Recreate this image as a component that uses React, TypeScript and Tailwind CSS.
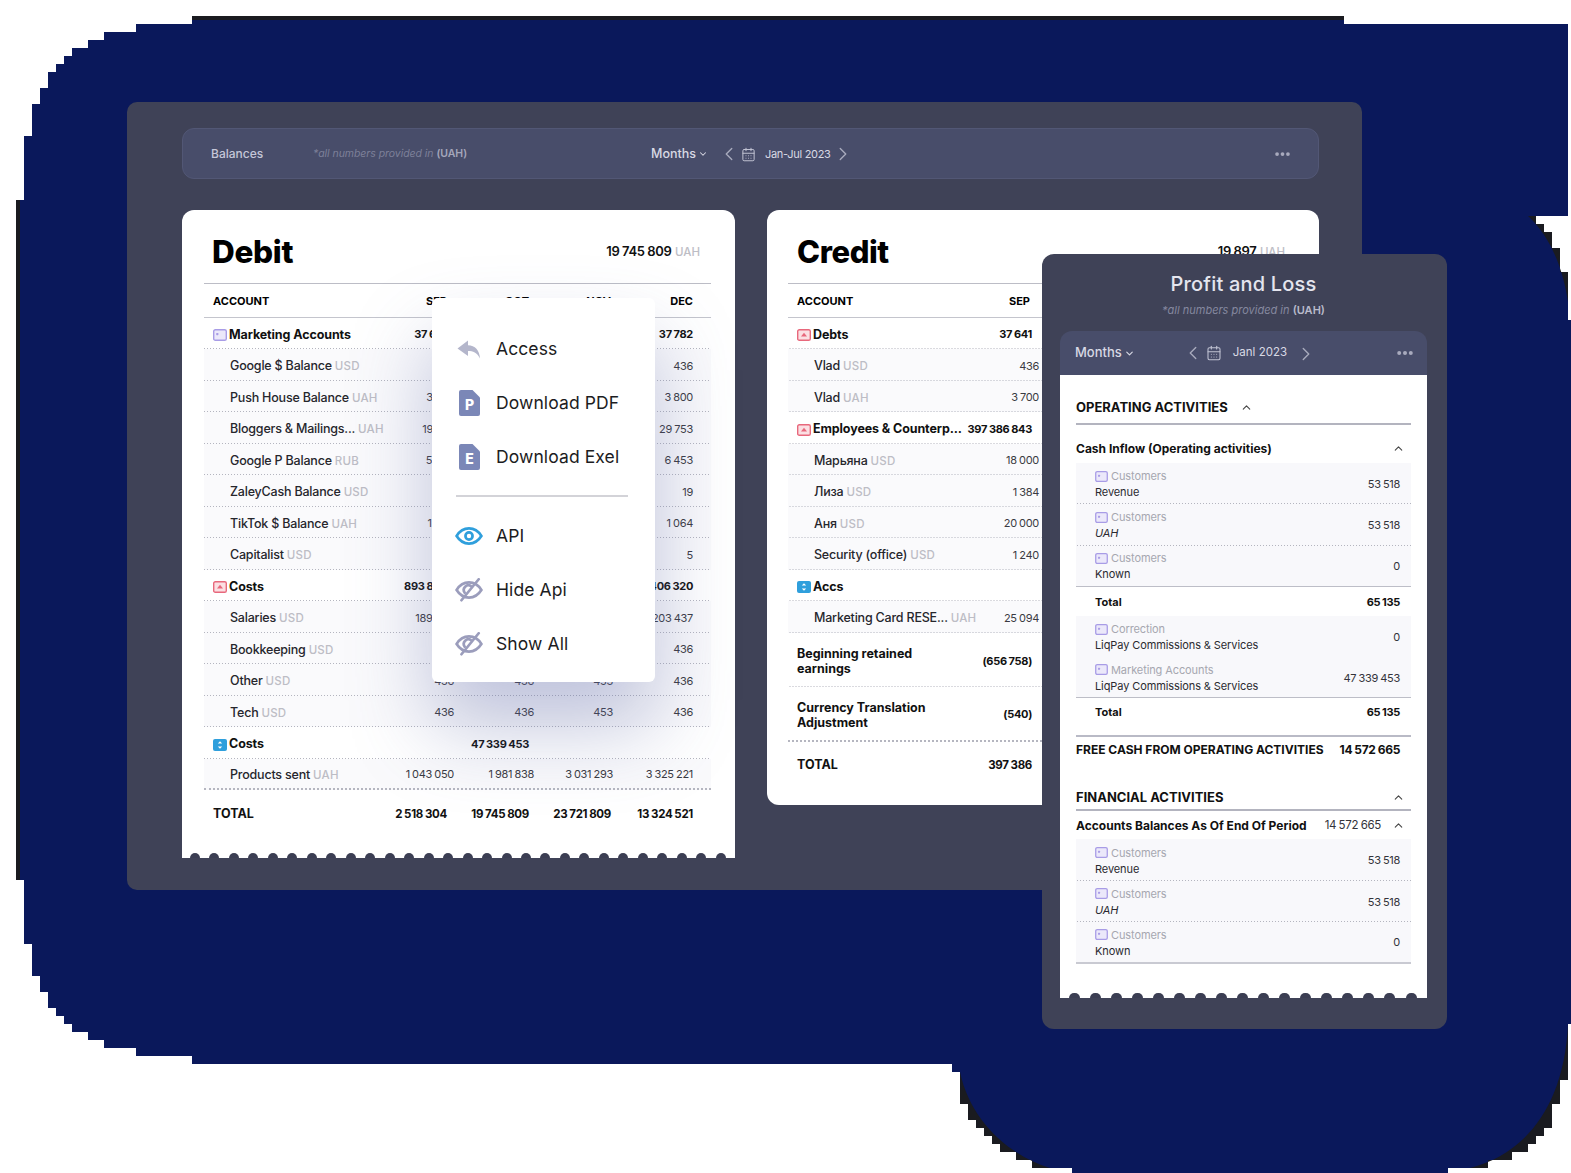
import { ReactNode } from "react";
import { CalendarDays, ChevronDown, ChevronLeft, ChevronRight, ChevronUp } from "lucide-react";

type Kind = "purple" | "red" | "blue";

const debitRows = [
  { icon: "purple", name: "Marketing Accounts", vals: ["37 641", "", "", "37 782"] },
  { name: "Google $ Balance", unit: "USD", vals: ["", "", "", "436"] },
  { name: "Push House Balance", unit: "UAH", vals: ["3 700", "", "", "3 800"] },
  { name: "Bloggers & Mailings...", unit: "UAH", vals: ["19 753", "", "", "29 753"] },
  { name: "Google P Balance", unit: "RUB", vals: ["5 453", "", "", "6 453"] },
  { name: "ZaleyCash Balance", unit: "USD", vals: ["", "", "", "19"] },
  { name: "TikTok $ Balance", unit: "UAH", vals: ["1 064", "", "", "1 064"] },
  { name: "Capitalist", unit: "USD", vals: ["", "", "", "5"] },
  { icon: "red", name: "Costs", vals: ["893 820", "", "", "406 320"] },
  { name: "Salaries", unit: "USD", vals: ["189 437", "", "", "203 437"] },
  { name: "Bookkeeping", unit: "USD", vals: ["", "", "", "436"] },
  { name: "Other", unit: "USD", vals: ["436", "436", "453", "436"] },
  { name: "Tech", unit: "USD", vals: ["436", "436", "453", "436"] },
  { icon: "blue", name: "Costs", vals: ["", "47 339 453", "", ""] },
  { name: "Products sent", unit: "UAH", vals: ["1 043 050", "1 981 838", "3 031 293", "3 325 221"], last: true },
];

const creditRows = [
  { icon: "red", name: "Debts", val: "37 641" },
  { name: "Vlad", unit: "USD", val: "436" },
  { name: "Vlad", unit: "UAH", val: "3 700" },
  { icon: "red", name: "Employees & Counterp...", val: "397 386 843" },
  { name: "Марьяна", unit: "USD", val: "18 000" },
  { name: "Лиза", unit: "USD", val: "1 384" },
  { name: "Аня", unit: "USD", val: "20 000" },
  { name: "Security (office)", unit: "USD", val: "1 240" },
  { icon: "blue", name: "Accs", val: "" },
  { name: "Marketing Card RESE...", unit: "UAH", val: "25 094" },
];

// repeating dots at the foot of a row, wider apart than a dotted border
const dots = "bg-[linear-gradient(to_right,#b4b5bf_1.5px,transparent_1.5px)] bg-[length:3px_1px] bg-bottom bg-repeat-x";
const num = "whitespace-nowrap tracking-[-0.3px] [word-spacing:-0.5px]";

function AccountIcon({ kind, small }: { kind: Kind; small?: boolean }) {
  const size = small ? "w-[13px] h-[11px]" : "w-[14px] h-[12px]";
  if (kind === "blue") {
    return (
      <svg viewBox="0 0 14 12" className={`${size} shrink-0`}>
        <rect width="14" height="12" rx="2" fill="#2f9fdc" />
        <path d="M7 2.200 9.200 4.600H4.800ZM7 9.800 4.800 7.400H9.200Z" fill="#fff" />
      </svg>
    );
  }
  const color = kind === "red" ? "#e8687c" : "#a89ce6";
  const fill = kind === "red" ? "#fbdfe3" : "#ebe8fa";
  return (
    <svg viewBox="0 0 14 12" className={`${size} shrink-0`}>
      <rect x="0.7" y="0.7" width="12.6" height="10.6" rx="1.6" fill={fill} stroke={color} strokeWidth="1.4" />
      {kind === "red" ? (
        <path d="M7 3.800 10 7.400H4Z" fill={color} />
      ) : (
        <rect x="3.200" y="4" width="2.200" height="2.200" rx="0.6" fill={color} />
      )}
    </svg>
  );
}

function Dots({ className }: { className: string }) {
  return (
    <svg viewBox="0 0 16 4" className={className}>
      <circle cx="2.200" cy="2" r="2" fill="currentColor" />
      <circle cx="8" cy="2" r="2" fill="currentColor" />
      <circle cx="13.800" cy="2" r="2" fill="currentColor" />
    </svg>
  );
}

function Scallops({ count, className, bump }: { count: number; className: string; bump: string }) {
  return (
    <div className={`absolute bottom-0 flex justify-between ${className}`}>
      {Array.from({ length: count }).map((_, i) => (
        <div key={i} className={`rounded-t-full bg-[#3b3e53] ${bump}`} />
      ))}
    </div>
  );
}

function Unit({ children }: { children: ReactNode }) {
  return <span className="ml-[3px] text-[11.5px] font-medium tracking-[0.2px] text-[#bdbdc5]">{children}</span>;
}

function DebitCard() {
  return (
    <div className="relative h-[648px] w-[553px] shrink-0 rounded-t-[12px] bg-white pl-[22px] pr-[24px]">
      <div className="flex h-[74px] items-center justify-between border-b-[1.5px] border-[#bcbdc6] pl-[8px] pr-[11px] pt-[11px]">
        <span className="text-[31.5px] font-extrabold tracking-[-0.3px] text-black">Debit</span>
        <span className={`text-[13px] font-semibold text-[#111] ${num}`}>
          19 745 809 <span className="ml-[1px] text-[11.5px] font-medium tracking-normal text-[#bdbdc5]">UAH</span>
        </span>
      </div>
      <div className="grid h-[33.5px] grid-cols-[minmax(0,1fr)_82px_82px_82px_82px] items-center border-b-[1.5px] border-[#c4c5cd] pl-[9px] pr-[18px] pt-[1px] text-[11px] font-bold text-black">
        <span>ACCOUNT</span>
        <span className="text-right">SEP</span>
        <span className="text-right">OCT</span>
        <span className="text-right">NOV</span>
        <span className="text-right">DEC</span>
      </div>
      {debitRows.map((row, i) =>
        row.icon ? (
          <div
            key={i}
            className={`grid h-[31.5px] grid-cols-[minmax(0,1fr)_82px_82px_82px_82px] items-center pl-[9px] pr-[18px] pt-[2px] text-[11px] font-bold text-[#111] ${dots}`}
          >
            <span className="mt-[2px] flex items-center gap-[2px] text-[12.5px] font-bold tracking-[-0.1px]">
              <AccountIcon kind={row.icon as Kind} />
              {row.name}
            </span>
            {row.vals.map((v, j) => (
              <span key={j} className={`text-right ${num}`}>
                {v}
              </span>
            ))}
          </div>
        ) : (
          <div
            key={i}
            className={`grid h-[31.5px] grid-cols-[minmax(0,1fr)_82px_80px_79px_80px] items-center bg-[#fafafc] pl-[26px] pr-[18px] pt-[2px] text-[11px] text-[#3a3a42] ${
              row.last ? "border-b-2 border-dotted border-[#b5b6c0]" : dots
            }`}
          >
            <span className="mt-[2px] whitespace-nowrap text-[12.5px] font-medium tracking-[-0.2px] text-[#26262c]">
              {row.name}
              <Unit>{row.unit}</Unit>
            </span>
            {row.vals.map((v, j) => (
              <span key={j} className={`text-right ${num}`}>
                {v}
              </span>
            ))}
          </div>
        )
      )}
      <div className="grid h-[45px] grid-cols-[minmax(0,1fr)_82px_82px_82px_82px] items-center pl-[9px] pr-[18px] pt-[4px] text-[11.5px] font-bold text-[#111]">
        <span className="text-[12.5px]">TOTAL</span>
        <span className={`text-right ${num}`}>2 518 304</span>
        <span className={`text-right ${num}`}>19 745 809</span>
        <span className={`text-right ${num}`}>23 721 809</span>
        <span className={`text-right ${num}`}>13 324 521</span>
      </div>
      <Scallops count={28} className="left-[8px] right-[9px]" bump="h-[5px] w-[10px]" />
    </div>
  );
}

function CreditCard() {
  return (
    <div className="h-[595px] w-[552px] shrink-0 rounded-[12px] bg-white pl-[21px] pr-[21px]">
      <div className="flex h-[74px] items-center justify-between border-b-[1.5px] border-[#bcbdc6] pl-[9px] pr-[13px] pt-[11px]">
        <span className="text-[31px] font-extrabold tracking-[-0.4px] text-black">Credit</span>
        <span className={`text-[13px] font-semibold text-[#111] ${num}`}>
          19 897 <span className="ml-[1px] text-[11.5px] font-medium tracking-normal text-[#bdbdc5]">UAH</span>
        </span>
      </div>
      <div className="h-[33.5px] border-b-[1.5px] border-[#c4c5cd]">
        <div className="flex h-full w-[242px] items-center justify-between pl-[9px] pt-[1px] text-[11px] font-bold text-black">
          <span>ACCOUNT</span>
          <span>SEP</span>
        </div>
      </div>
      {creditRows.map((row, i) =>
        row.icon ? (
          <div key={i} className={`h-[31.5px] ${dots}`}>
            <div className="flex h-full w-[244px] items-center justify-between pl-[9px] pt-[2px] text-[11px] font-bold text-[#111]">
              <span className="mt-[2px] flex items-center gap-[2px] whitespace-nowrap text-[12.5px] tracking-[-0.1px]">
                <AccountIcon kind={row.icon as Kind} />
                {row.name}
              </span>
              <span className={num}>{row.val}</span>
            </div>
          </div>
        ) : (
          <div key={i} className={`h-[31.5px] bg-[#fafafc] ${dots}`}>
            <div className="flex h-full w-[251px] items-center justify-between pl-[26px] pt-[2px] text-[11px] text-[#3a3a42]">
              <span className="mt-[2px] whitespace-nowrap text-[12.5px] font-medium tracking-[-0.2px] text-[#26262c]">
                {row.name}
                <Unit>{row.unit}</Unit>
              </span>
              <span className={num}>{row.val}</span>
            </div>
          </div>
        )
      )}
      <div className={`h-[54px] ${dots}`}>
        <div className="flex h-full w-[244px] items-center justify-between pl-[9px] pt-[3px] text-[12.5px] font-bold leading-[15px] text-[#111]">
          <span>
            Beginning retained
            <br />
            earnings
          </span>
          <span className={`text-[11px] ${num}`}>(656 758)</span>
        </div>
      </div>
      <div className="h-[55px] border-b-2 border-dotted border-[#b5b6c0]">
        <div className="flex h-full w-[244px] items-center justify-between pl-[9px] pt-[3px] text-[12.5px] font-bold leading-[15px] text-[#111]">
          <span>
            Currency Translation
            <br />
            Adjustment
          </span>
          <span className={`text-[11px] ${num}`}>(540)</span>
        </div>
      </div>
      <div className="flex h-[44px] w-[244px] items-center justify-between pl-[9px] pt-[4px] text-[11.5px] font-bold text-[#111]">
        <span className="text-[12.5px]">TOTAL</span>
        <span className={num}>397 386</span>
      </div>
    </div>
  );
}

function ReplyIcon() {
  return (
    <svg viewBox="0 0 24 19" className="h-[19px] w-[24px]">
      <path d="M11 .5 .5 8.400 11 16V11c5 0 9 1.500 12 7.500C22.600 10 18 5.300 11 5.200Z" fill="#b4b6cb" />
    </svg>
  );
}

function FileIcon({ letter }: { letter: string }) {
  return (
    <svg viewBox="0 0 21 26" className="h-[26px] w-[21px]">
      <path d="M2 0H13.500L21 7.500V24a2 2 0 0 1-2 2H2a2 2 0 0 1-2-2V2A2 2 0 0 1 2 0Z" fill="#7b87b7" />
      <text x="10.500" y="19.500" textAnchor="middle" fontSize="14" fontWeight="800" fill="#fff" fontFamily="Inter, sans-serif">
        {letter}
      </text>
    </svg>
  );
}

function EyeIcon({ slashed }: { slashed?: boolean }) {
  const color = slashed ? "#9b9dbc" : "#2f9fdc";
  return (
    <svg viewBox="0 0 26 22" className="h-[24px] w-[28px]" fill="none" stroke={color} strokeWidth="2.500" strokeLinecap="round">
      <path d="M1.500 11C4.500 6.200 8.500 4 13 4s8.500 2.200 11.500 7C21.500 15.800 17.500 18 13 18S4.500 15.800 1.500 11Z" />
      {slashed ? (
        <>
          <path d="M9 13.500a4.300 4.300 0 0 1 6-6" />
          <path d="M6 20.500 22 1" />
        </>
      ) : (
        <circle cx="13" cy="11" r="3.300" />
      )}
    </svg>
  );
}

function MenuItem({ icon, label }: { icon: ReactNode; label: string }) {
  return (
    <div className="flex h-[54.2px] items-center">
      <div className="flex w-[64px] justify-center pl-[10px]">{icon}</div>
      <span className="text-[17.5px] font-normal tracking-[0.1px] text-[#1c1c22]">{label}</span>
    </div>
  );
}

function Menu() {
  return (
    <div className="absolute left-[432px] top-[298px] h-[384px] w-[223px] rounded-[6px] bg-white pt-[24px] shadow-[0_45px_80px_0_rgba(95,105,165,0.38)]">
      <MenuItem icon={<ReplyIcon />} label="Access" />
      <MenuItem icon={<FileIcon letter="P" />} label="Download PDF" />
      <MenuItem icon={<FileIcon letter="E" />} label="Download Exel" />
      <div className="mb-[12px] ml-[24px] mt-[10px] h-[2px] w-[172px] bg-[#d3d3d8]" />
      <MenuItem icon={<EyeIcon />} label="API" />
      <MenuItem icon={<EyeIcon slashed />} label="Hide Api" />
      <MenuItem icon={<EyeIcon slashed />} label="Show All" />
    </div>
  );
}

function PnlRow({ label, sub, value, italic, border, tall }: { label: string; sub: string; value: string; italic?: boolean; border?: string; tall?: boolean }) {
  return (
    <div className={`flex items-center justify-between bg-[#f8f8fb] pl-[19px] pr-[11px] pt-[1px] text-[11px] ${tall ? "h-[42.3px]" : "h-[41.3px]"} ${border ?? ""}`}>
      <div className="leading-[16px] tracking-[-0.1px]">
        <div className="flex items-center gap-[3px] text-[#a6a7b0]">
          <AccountIcon kind="purple" small />
          {label}
        </div>
        <div className={`text-[#2a2a30] ${italic ? "italic" : ""}`}>{sub}</div>
      </div>
      <span className={`text-[#33333a] ${num}`}>{value}</span>
    </div>
  );
}

const solid = "border-b-[1.5px] border-[#bdbec7]";

function ProfitLoss() {
  return (
    <div className="absolute left-[1042px] top-[254px] h-[775px] w-[405px] rounded-[12px] bg-[#3f4257] pl-[18px] pr-[20px]">
      <div className="pt-[16px] text-center text-[20px] font-medium leading-[28px] tracking-[0.2px] text-[#e4e5ee]">Profit and Loss</div>
      <div className="mt-[4px] text-center text-[11px] italic leading-[16px] text-[#85889f]">
        *all numbers provided in <span className="font-semibold not-italic text-[#b9bbcb]">(UAH)</span>
      </div>
      <div className="mt-[13px] flex h-[44px] items-center rounded-t-[12px] bg-[#484d6a] pl-[15px] pr-[14px] text-[#d8d9e4]">
        <span className="text-[13px] font-medium">Months</span>
        <ChevronDown size={11} strokeWidth={2.5} className="ml-[2px]" />
        <ChevronLeft size={22} strokeWidth={1.5} className="ml-[47px] text-[#a8aabd]" />
        <CalendarDays size={16} strokeWidth={1.6} className="ml-[2px] text-[#c0c2d2]" />
        <span className="ml-[11px] text-[11.5px]">Janl 2023</span>
        <ChevronRight size={22} strokeWidth={1.5} className="ml-[8px] mt-[2px] text-[#a8aabd]" />
        <Dots className="ml-auto h-[4px] w-[16px] text-[#a8aabd]" />
      </div>
      <div className="relative h-[623px] bg-white px-[16px]">
        <div className="flex h-[49.5px] items-center gap-[12px] border-b-2 border-[#b3b4bf] pt-[17px] text-[13px] font-bold text-[#111]">
          OPERATING ACTIVITIES
          <ChevronUp size={13} strokeWidth={2} className="text-[#444]" />
        </div>
        <div className="flex h-[38.5px] items-center justify-between pr-[6px] pt-[10px] text-[12px] font-bold text-[#111]">
          Cash Inflow (Operating activities)
          <ChevronUp size={13} strokeWidth={2} className="text-[#444]" />
        </div>
        <PnlRow label="Customers" sub="Revenue" value="53 518" border={dots} />
        <PnlRow label="Customers" sub="UAH" italic value="53 518" border={dots} />
        <PnlRow label="Customers" sub="Known" value="0" border={solid} />
        <div className="flex h-[29px] items-center justify-between pl-[19px] pr-[11px] pt-[1px] text-[11px] font-bold text-[#111]">
          <span>Total</span>
          <span className={num}>65 135</span>
        </div>
        <PnlRow label="Correction" sub="LiqPay Commissions & Services" value="0" />
        <PnlRow label="Marketing Accounts" sub="LiqPay Commissions & Services" value="47 339 453" border={solid} />
        <div className="flex h-[38.5px] items-center justify-between border-b-2 border-[#b9bac6] pb-[9px] pl-[19px] pr-[11px] text-[11px] font-bold text-[#111]">
          <span>Total</span>
          <span className={num}>65 135</span>
        </div>
        <div className="flex h-[25px] items-center justify-between pr-[11px] pt-[1px] text-[12px] font-bold text-[#111]">
          <span>FREE CASH FROM OPERATING ACTIVITIES</span>
          <span className={num}>14 572 665</span>
        </div>
        <div className="flex h-[49px] items-center justify-between border-b-2 border-[#b3b4bf] pr-[6px] pt-[24px] text-[13px] font-bold text-[#111]">
          FINANCIAL ACTIVITIES
          <ChevronUp size={13} strokeWidth={2} className="text-[#444]" />
        </div>
        <div className="flex h-[28.5px] items-center pr-[6px] pt-[1px] text-[12px] font-bold text-[#111]">
          <span>Accounts Balances As Of End Of Period</span>
          <span className={`ml-auto text-[11.5px] font-normal text-[#33333a] ${num}`}>14 572 665</span>
          <ChevronUp size={13} strokeWidth={2} className="ml-[11px] text-[#444]" />
        </div>
        <PnlRow label="Customers" sub="Revenue" value="53 518" border={dots} />
        <PnlRow label="Customers" sub="UAH" italic value="53 518" border={dots} />
        <PnlRow label="Customers" sub="Known" value="0" tall border="border-b-2 border-[#c9cad2]" />
        <Scallops count={17} className="left-[9px] right-[10.5px]" bump="h-[5.5px] w-[11px]" />
      </div>
    </div>
  );
}

export default function App() {
  return (
    <div className="relative h-[1173px] w-[1571px] overflow-hidden bg-white font-['Inter','Noto_Sans',sans-serif]">
      <svg viewBox="0 0 1571 1173" className="absolute inset-0 h-full w-full">
        <path
          d="M192 16H1344V24H1568V216H1536V224H1544V232H1552V248H1560V272H1568V320H1571V1024H1568V1080H1560V1104H1552V1128H1544V1136H1536V1144H1528V1152H1512V1160H1488V1168H1448V1173H1072V1168H1032V1160H1016V1152H1000V1144H992V1136H984V1128H976V1120H968V1104H960V1072H952V1064H192V1056H136V1048H104V1040H88V1032H72V1024H64V1016H56V1008H48V992H40V976H32V944H24V880H16V200H24V136H32V104H40V88H48V72H56V64H64V56H72V48H88V40H104V32H136V24H192Z"
          fill="#0a185b"
          shapeRendering="crispEdges"
        />
        <g fill="#1a1b20">
          <rect x="192" y="16" width="1152" height="4" />
          <rect x="16" y="200" width="4" height="680" />
          <path d="M1528 216H1536V224H1544V232H1552V248H1560V272H1568V302C1563 268 1550 236 1528 216Z" />
          <path d="M1568 1024V1080H1560V1104H1552V1128H1544V1136H1536V1144H1528V1152H1512V1160H1488V1168H1470C1522 1155 1564 1110 1568 1024Z" />
          <path d="M960 1072V1104H968V1120H976V1128H984V1136H992V1144H1000V1152H1016V1160H1032V1168H1050C1008 1155 970 1120 960 1072Z" />
        </g>
      </svg>

      <div className="absolute left-[127px] top-[102px] h-[788px] w-[1235px] rounded-[10px] bg-[#3f4257] pl-[55px] pr-[43px] pt-[26px]">
        <div className="flex h-[51px] items-center rounded-[12px] border border-[#525775] bg-[#484d6a] pl-[28px] pr-[28px] pt-[1px] text-[#d8d9e4]">
          <span className="w-[102px] text-[12px] font-medium text-[#c5c7d8]">Balances</span>
          <span className="w-[338px] text-[10.5px] italic tracking-[-0.05px] text-[#7d8099]">
            *all numbers provided in <span className="font-semibold not-italic text-[#a5a7bb]">(UAH)</span>
          </span>
          <span className="text-[12.5px] font-medium">Months</span>
          <ChevronDown size={10} strokeWidth={2.5} className="ml-[2px]" />
          <ChevronLeft size={22} strokeWidth={1.5} className="ml-[10px] text-[#a8aabd]" />
          <CalendarDays size={15} strokeWidth={1.6} className="ml-[1px] text-[#c0c2d2]" />
          <span className="ml-[9px] text-[11px] tracking-[-0.3px]">Jan-Jul 2023</span>
          <ChevronRight size={22} strokeWidth={1.5} className="ml-[1px] text-[#a8aabd]" />
          <Dots className="ml-auto h-[4px] w-[15px] text-[#a8aabd]" />
        </div>
        <div className="mt-[31px] flex items-start gap-[32px]">
          <DebitCard />
          <CreditCard />
        </div>
      </div>

      <Menu />
      <ProfitLoss />
    </div>
  );
}
